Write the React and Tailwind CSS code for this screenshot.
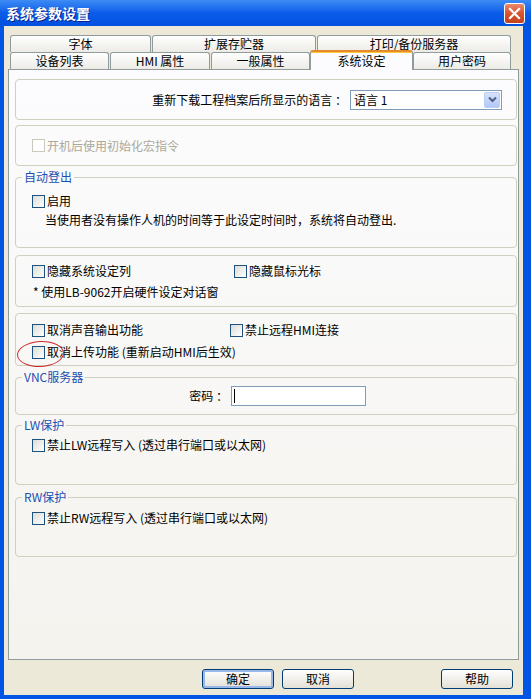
import React from 'react';

const Check = ({ disabled }) =>
  disabled ? (
    <span className="block w-[13px] h-[13px] shrink-0 border border-[#CAC8BB] bg-white" />
  ) : (
    <span className="block w-[13px] h-[13px] shrink-0 border border-[#1C5180] bg-linear-to-br from-[#DCDCD7] to-white" />
  );

const CheckRow = ({ label, disabled, className = '' }) => (
  <div className={`flex items-center h-[18px] gap-[2px] ${className}`}>
    <Check disabled={disabled} />
    <span className={disabled ? 'text-[#ACA899]' : ''}>{label}</span>
  </div>
);

const Tab = ({ className = '', children }) => (
  <div
    className={`h-full flex items-center justify-center leading-[16px] border border-b-0 border-[#919B9C] rounded-t-[3px] bg-linear-to-b from-white to-[#ECEBE6] ${className}`}
  >
    {children}
  </div>
);

const Group = ({ title, className = '', children }) => (
  <fieldset className={`border border-[#D0D0BF] rounded-[4px] px-[6px] ${className}`}>
    <legend className="px-[2px] leading-[14px] text-[#1C4FB0]">{title}</legend>
    {children}
  </fieldset>
);

const Button = ({ focused, className = '', children }) => (
  <button
    className={`w-[72px] h-[20px] rounded-[3px] border border-[#003C74] bg-linear-to-b from-white to-[#E3E0D6] leading-[16px] ${
      focused ? 'shadow-[inset_0_0_0_2px_#98B8EA]' : ''
    } ${className}`}
  >
    {children}
  </button>
);

function TitleBar() {
  return (
    <div className="h-[26px] shrink-0 flex items-center justify-between pl-[6px] pr-[6px] bg-linear-to-b from-[#3D8BF5] via-[#0A5CE8] to-[#0050E0]">
      <span className="text-white font-bold text-[14px] leading-[18px] [text-shadow:1px_1px_#0A1F8A]">系统参数设置</span>
      <div className="w-[21px] h-[21px] rounded-[3px] border border-white bg-linear-to-b from-[#E88A6C] via-[#D8522E] to-[#C4401C] flex items-center justify-center">
        <svg width="13" height="13" viewBox="0 0 13 13">
          <path d="M2 2 L11 11 M11 2 L2 11" stroke="white" strokeWidth="2.2" strokeLinecap="square" />
        </svg>
      </div>
    </div>
  );
}

function Tabs() {
  return (
    <div className="pl-[6px]">
      <div className="flex h-[17px] gap-[1px]">
        <Tab className="w-[141px]">字体</Tab>
        <Tab className="w-[164px]">扩展存贮器</Tab>
        <Tab className="w-[194px]">打印/备份服务器</Tab>
      </div>
      <div className="relative z-10 flex items-end h-[17px]">
        <Tab className="w-[99px]">设备列表</Tab>
        <Tab className="w-[100px] ml-[1px]">HMI 属性</Tab>
        <Tab className="w-[99px] ml-[1px]">一般属性</Tab>
        <div className="w-[103px] h-[20px] -mb-px flex items-center justify-center leading-[16px] border border-b-0 border-[#919B9C] border-t-2 border-t-[#E68B2C] shadow-[inset_0_1px_0_#FFC83C] rounded-t-[3px] bg-[#FCFCFE]">
          系统设定
        </div>
        <Tab className="w-[98px]">用户密码</Tab>
      </div>
    </div>
  );
}

function Panel() {
  return (
    <div className="ml-[4px] w-[511px] h-[591px] shrink-0 border border-[#919B9C] bg-linear-to-b from-[#FCFCFE] to-[#F4F3EE] pl-[6px] pt-[9px]">
      <div className="w-[502px] flex flex-col">
        <div className="h-[41px] border border-[#D0D0BF] rounded-[4px] flex items-center justify-end pr-[14px]">
          <span className="mr-[3px]">重新下载工程档案后所显示的语言 ：</span>
          <div className="w-[152px] h-[20px] border border-[#7F9DB9] bg-white flex items-center justify-between pl-[3px] pr-[1px]">
            <span>语言 1</span>
            <span className="w-[16px] h-[16px] rounded-[2px] border border-[#B9CDF7] bg-linear-to-b from-[#D6E2FC] to-[#B3C8F7] flex items-center justify-center">
              <svg width="9" height="7" viewBox="0 0 9 7">
                <path d="M1 1.5 L4.5 5 L8 1.5" stroke="#4D6185" strokeWidth="2" fill="none" />
              </svg>
            </span>
          </div>
        </div>

        <div className="mt-[5px] h-[41px] border border-[#D0D0BF] rounded-[4px] flex items-center pl-[16px]">
          <CheckRow disabled label="开机后使用初始化宏指令" />
        </div>

        <Group title="自动登出" className="mt-[4px] h-[78px]">
          <div className="pl-[10px] pt-[8px] flex flex-col gap-[1px]">
            <CheckRow label="启用" />
            <div className="h-[18px] leading-[18px] pl-[13px]">
              当使用者没有操作人机的时间等于此设定时间时，系统将自动登出.
            </div>
          </div>
        </Group>

        <div className="mt-[7px] h-[52px] border border-[#D0D0BF] rounded-[4px] pl-[16px] pt-[6px] flex flex-col gap-[3px]">
          <div className="flex">
            <CheckRow label="隐藏系统设定列" className="w-[202px]" />
            <CheckRow label="隐藏鼠标光标" />
          </div>
          <div className="h-[18px] leading-[18px] pl-[1px]">* 使用LB-9062开启硬件设定对话窗</div>
        </div>

        <div className="relative mt-[6px] h-[53px] border border-[#D0D0BF] rounded-[4px] pl-[16px] pt-[7px] flex flex-col gap-[4px]">
          <div className="flex">
            <CheckRow label="取消声音输出功能" className="w-[198px]" />
            <CheckRow label="禁止远程HMI连接" />
          </div>
          <CheckRow label="取消上传功能 (重新启动HMI后生效)" />
          <div className="absolute left-[1px] top-[27px] w-[47px] h-[26px] rounded-[50%] border border-[#D02828] -rotate-3" />
        </div>

        <Group title="VNC服务器" className="mt-[4px] h-[45px]">
          <div className="pt-[2px] flex items-center h-[22px]">
            <span className="w-[209px] text-right pr-[3px]">密码 ：</span>
            <div className="w-[135px] h-[20px] border border-[#7F9DB9] bg-white flex items-center pl-[2px]">
              <span className="block w-px h-[14px] bg-black" />
            </div>
          </div>
        </Group>

        <Group title="LW保护" className="mt-[3px] h-[67px]">
          <div className="pl-[10px] pt-[4px]">
            <CheckRow label="禁止LW远程写入 (透过串行端口或以太网)" />
          </div>
        </Group>

        <Group title="RW保护" className="mt-[5px] h-[67px]">
          <div className="pl-[10px] pt-[5px]">
            <CheckRow label="禁止RW远程写入 (透过串行端口或以太网)" />
          </div>
        </Group>
      </div>
    </div>
  );
}

export default function App() {
  return (
    <div className="w-[531px] h-[699px] flex flex-col overflow-hidden bg-[#0055E5] text-[12px] text-black font-['Noto_Sans_CJK_SC','Noto_Sans',sans-serif]">
      <TitleBar />
      <div className="flex-1 flex flex-col bg-[#ECE9D8] ml-[4px] mr-[8px] mb-[4px] pt-[9px]">
        <Tabs />
        <Panel />
        <div className="mt-[9px] flex">
          <Button focused className="ml-[198px]">确定</Button>
          <Button className="ml-[8px]">取消</Button>
          <Button className="ml-[87px]">帮助</Button>
        </div>
      </div>
    </div>
  );
}
